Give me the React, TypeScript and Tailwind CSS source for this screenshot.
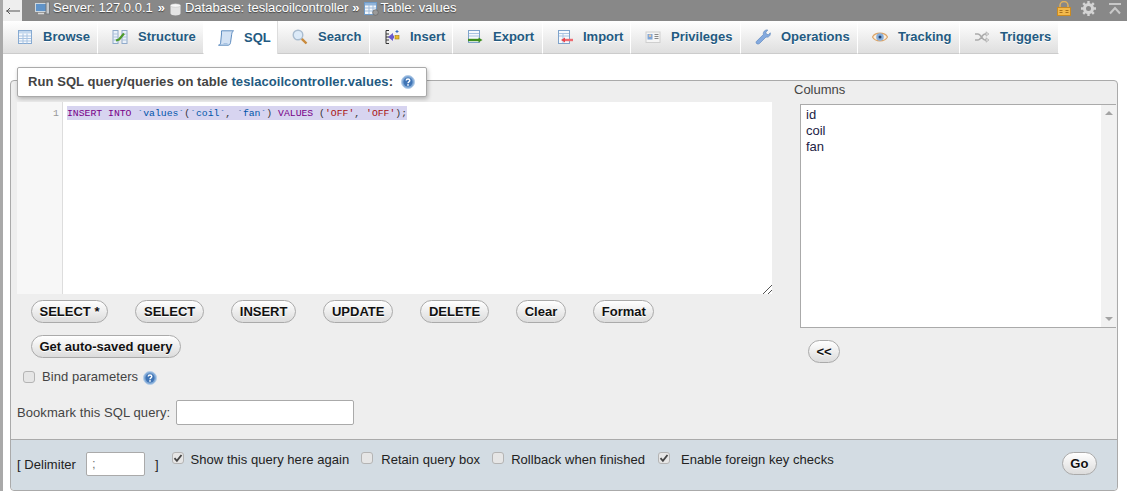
import React from "react";

const HelpIcon = () => (
  <svg width="14" height="14" viewBox="0 0 14 14" className="shrink-0">
    <circle cx="7" cy="7" r="6.5" fill="#7fa8d6" stroke="#b4cde8" />
    <circle cx="7" cy="7" r="4.6" fill="#3f74b5" />
    <path d="M5.200 5.600c0-2.200 3.600-2.200 3.600 0 0 1.300-1.800 1.300-1.800 2.600" fill="none" stroke="#fff" strokeWidth="1.400" />
    <rect x="6.200" y="9.200" width="1.600" height="1.500" fill="#fff" />
  </svg>
);

const Ico = ({ children }: { children: React.ReactNode }) => (
  <svg width="16" height="16" viewBox="0 0 16 16" className="shrink-0">
    {children}
  </svg>
);

const BrowseIcon = () => (
  <Ico>
    <rect x="1.500" y="1.500" width="13" height="13" fill="#f6f9fd" stroke="#86aad2" />
    <rect x="2" y="2" width="12" height="2.500" fill="#c3d8ee" />
    <path d="M2 7h12M2 9.500h12M2 12h12M6 4.500v10M10 4.500v10" stroke="#a9c4e2" fill="none" />
  </Ico>
);

const StructureIcon = () => (
  <Ico>
    <rect x="1" y="1.500" width="5" height="13" fill="#eaf1f9" stroke="#8faaca" />
    <rect x="10" y="1.500" width="5" height="13" fill="#eaf1f9" stroke="#8faaca" />
    <path d="M1 5h5M1 8h5M1 11h5M10 5h5M10 8h5M10 11h5" stroke="#aec3da" />
    <path d="M4 11.500l3-1 5-6" fill="none" stroke="#4c9a2a" strokeWidth="2.200" />
  </Ico>
);

const SqlIcon = () => (
  <Ico>
    <path d="M3.500.800h12c-1.100.7-1.600 1.800-1.800 3.500l-1.200 8.400c-.3 1.600-1.100 2.500-2.400 2.500H.500c1.200 0 1.900-.9 2.100-2.300L3.500 4C3.700 2.500 3.200 1.500 3.500.800z" fill="#d3e2f4" stroke="#5f8dc0" />
    <path d="M5.500 13.500h4" stroke="#a6c2e2" />
  </Ico>
);

const SearchIcon = () => (
  <Ico>
    <circle cx="6" cy="6" r="4.800" fill="#dceaf8" stroke="#a9bccf" strokeWidth="1.400" />
    <path d="M9.800 9.800l4.700 4.700" stroke="#c98a3c" strokeWidth="2.400" />
  </Ico>
);

const InsertIcon = () => (
  <Ico>
    <path d="M5 1.500H2v13h3M2 5h3M2 8h3M2 11h3" fill="none" stroke="#333" />
    <path d="M4 8l5-4v2.500h1v3H9V12z" fill="#6a5acd" />
    <rect x="11" y="6.500" width="4" height="3.500" fill="#e8b92e" stroke="#a57f10" strokeWidth=".6" />
    <path d="M13 1v3M11.500 2.500h3" stroke="#3a6bc0" />
  </Ico>
);

const ExportIcon = () => (
  <Ico>
    <rect x="1.500" y="1.500" width="11" height="12" fill="#f6f9fd" stroke="#7fa3cb" />
    <path d="M2 4.500h10M2 7h10" stroke="#a9c4e2" />
    <path d="M1 11h11" stroke="#3e8e1f" strokeWidth="2.400" />
    <path d="M11.500 8.500l4 2.500-4 2.500z" fill="#3e8e1f" />
  </Ico>
);

const ImportIcon = () => (
  <Ico>
    <rect x="1.500" y="1.500" width="11" height="13" fill="#f6f9fd" stroke="#7fa3cb" />
    <path d="M2 4.500h10M2 7h10M6 4v10" stroke="#a9c4e2" />
    <path d="M7 11h9" stroke="#ee6a70" strokeWidth="2.400" />
    <path d="M8 8.500l-4 2.500 4 2.500z" fill="#e8454c" />
  </Ico>
);

const PrivilegesIcon = () => (
  <Ico>
    <rect x="1" y="3" width="14" height="10.500" fill="#f5f5f5" stroke="#cfcfcf" />
    <rect x="2.500" y="5" width="5" height="5.500" fill="#7fa6d8" />
    <circle cx="5" cy="6.800" r="1.300" fill="#e9c9a5" />
    <path d="M9.500 5.500h4M9.500 7.500h4M9.500 9.500h4" stroke="#888" />
  </Ico>
);

const OperationsIcon = () => (
  <Ico>
    <path d="M3 15c-1.400 0-2.300-1.100-1.700-2.400L8.400 5.500C7.800 3 9.800.6 12.800 1L10.800 3.200l.6 2 2 .6 1.900-2c.5 2.800-1.900 5-4.300 4.200L4.500 14.500c-.4.300-.9.500-1.500.500z" fill="#84aadf" stroke="#6089c0" strokeWidth=".7" />
  </Ico>
);

const TrackingIcon = () => (
  <Ico>
    <path d="M.5 8C3 2.800 13 2.800 15.500 8 13 13.200 3 13.200.5 8z" fill="#fbeedd" stroke="#dba468" strokeWidth="1.200" />
    <circle cx="8" cy="8" r="3.800" fill="#86aedb" />
    <circle cx="8" cy="8" r="1.500" fill="#24406b" />
  </Ico>
);

const TriggersIcon = () => (
  <Ico>
    <path d="M1 5h3c3 0 4 6 7 6h1M1 11h3c3 0 4-6 7-6h1" fill="none" stroke="#aaa" strokeWidth="1.500" />
    <path d="M12 2.800l3 2.200-3 2.200zM12 8.800l3 2.200-3 2.200z" fill="#ddd" stroke="#999" strokeWidth=".5" />
  </Ico>
);

const tabs = [
  { label: "Browse", icon: <BrowseIcon />, w: "w-[95px]" },
  { label: "Structure", icon: <StructureIcon />, w: "w-[106px]" },
  { label: "SQL", icon: <SqlIcon />, w: "w-[74px]", active: true },
  { label: "Search", icon: <SearchIcon />, w: "w-[92px]" },
  { label: "Insert", icon: <InsertIcon />, w: "w-[83px]" },
  { label: "Export", icon: <ExportIcon />, w: "w-[90px]" },
  { label: "Import", icon: <ImportIcon />, w: "w-[88px]" },
  { label: "Privileges", icon: <PrivilegesIcon />, w: "w-[110px]" },
  { label: "Operations", icon: <OperationsIcon />, w: "w-[117px]" },
  { label: "Tracking", icon: <TrackingIcon />, w: "w-[102px]" },
  { label: "Triggers", icon: <TriggersIcon />, w: "w-[99px]" },
];

function Btn({ children }: { children: React.ReactNode }) {
  return (
    <button className="h-[23px] rounded-full border border-[#aaaaaa] bg-gradient-to-b from-[#ffffff] to-[#dcdcdc] px-[7.500px] text-[13px] leading-[21px] font-bold text-[#111111] [text-shadow:0_1px_0_#ffffff]">
      {children}
    </button>
  );
}

function Check({ on, className }: { on?: boolean; className: string }) {
  return (
    <span className={`flex h-[12px] w-[12px] shrink-0 items-center justify-center rounded-[3px] border border-[#b4b4b4] bg-[#e6e6e6] ${className}`}>
      {on && (
        <svg width="10" height="10" viewBox="0 0 10 10">
          <path d="M1.500 5.200l2.400 2.600L8.500 2" fill="none" stroke="#444" strokeWidth="1.800" />
        </svg>
      )}
    </span>
  );
}

export default function App() {
  return (
    <div className="flex h-[491px] w-[1127px] overflow-hidden bg-white font-['Liberation_Sans',Arial,sans-serif] text-[13px] text-[#444444]">
      <div className="w-[3px] shrink-0 bg-[#a9a9a9]" />
      <div className="flex min-w-0 flex-1 flex-col">
        {/* breadcrumb */}
        <div className="flex h-[21px] shrink-0 items-center bg-[#888888] pb-[5px] text-white [text-shadow:0_1px_1px_#444444]">
          <div className="flex h-[21px] w-[19px] items-center justify-center self-start bg-[#eeeeee] text-[15px] leading-none text-[#555555] [text-shadow:none]">
            <svg width="14" height="8" viewBox="0 0 14 8">
              <path d="M0 4h14M4 1L1 4l3 3" fill="none" stroke="#555" />
            </svg>
          </div>
          <svg width="15" height="14" viewBox="0 0 15 14" className="ml-[13px] mr-[3px]">
            <rect x="0.500" y="2.500" width="11" height="8" fill="#5f93c9" stroke="#ccd6de" />
            <rect x="11" y="1" width="3.500" height="12" fill="#c4c8cc" stroke="#74787c" />
            <path d="M3 12.500h6" stroke="#d8d8d8" strokeWidth="1.500" />
          </svg>
          <span className="whitespace-nowrap">Server: 127.0.0.1</span>
          <span className="ml-[5px] font-bold">»</span>
          <svg width="11" height="13" viewBox="0 0 11 13" className="ml-[5px] mr-[4px] mt-[2px]">
            <path d="M.500 2.500v8c0 2.500 10 2.500 10 0v-8z" fill="#e4e4e4" />
            <ellipse cx="5.500" cy="2.500" rx="5" ry="1.800" fill="#f6f6f6" stroke="#bbb" strokeWidth=".5" />
          </svg>
          <span className="whitespace-nowrap">Database: teslacoilcontroller</span>
          <span className="ml-[4px] font-bold">»</span>
          <svg width="15" height="14" viewBox="0 0 15 14" className="ml-[4px] mr-[2px] mt-[2px]">
            <rect x="0.500" y="0.500" width="12" height="12" fill="#f4f8fc" stroke="#6f9bc8" />
            <rect x="1" y="1" width="11" height="2.500" fill="#8fb3d9" />
            <path d="M1 6h11M1 9h11M5 3v9M9 3v9" stroke="#9fbcdc" />
            <circle cx="11.500" cy="10.500" r="2.800" fill="#9a9a9a" stroke="#666" strokeWidth=".7" />
          </svg>
          <span className="whitespace-nowrap">Table: values</span>
          <div className="ml-auto flex items-center gap-[10px] pr-[6px] pt-[1px]">
            <svg width="14" height="15" viewBox="0 0 14 15">
              <path d="M3 7V4.500a4 4 0 0 1 8 0V7" fill="none" stroke="#e0b25e" strokeWidth="1.500" />
              <rect x="0.500" y="6.500" width="13" height="8" fill="#f2b94c" stroke="#c98a22" />
              <path d="M2.500 9.500h3M8.500 9.500h3M2.500 11.500h3M8.500 11.500h3" stroke="#a8701c" />
            </svg>
            <svg width="15" height="15" viewBox="0 0 15 15">
              <circle cx="7.500" cy="7.500" r="4" fill="none" stroke="#d4d4d4" strokeWidth="3" />
              <path d="M7.500 0v3M7.500 12v3M0 7.500h3M12 7.500h3M2.200 2.200l2 2M10.800 10.800l2 2M2.200 12.800l2-2M10.800 4.200l2-2" stroke="#d4d4d4" strokeWidth="2.400" />
            </svg>
            <svg width="12" height="12" viewBox="0 0 12 12" className="ml-[3px]">
              <path d="M0 1h12M1 10.500l5-5.500 5 5.500" fill="none" stroke="#c8c8c8" strokeWidth="2" />
            </svg>
          </div>
        </div>

        {/* tabs */}
        <div className="flex h-[33px] shrink-0 items-stretch">
          {tabs.map((t) => (
            <div
              key={t.label}
              className={
                t.active
                  ? `flex items-center whitespace-nowrap border-r border-[#dddddd] bg-white pl-[14px] text-[13px] font-bold text-[#235a81] [text-shadow:0_1px_0_#ffffff] ${t.w}`
                  : `flex items-center whitespace-nowrap border-r border-b border-r-white border-b-[#cccccc] bg-gradient-to-b from-[#ffffff] to-[#dfdfdf] pl-[14px] text-[13px] font-bold text-[#235a81] [text-shadow:0_1px_0_#ffffff] ${t.w}`
              }
            >
              <span className="mr-[10px] flex">{t.icon}</span>
              {t.label}
            </div>
          ))}
        </div>

        {/* query form */}
        <div className="relative ml-[7px] mr-[9px] mt-[26px] flex h-[411px] flex-col rounded-[4px] border border-[#aaaaaa] bg-[#eeeeee]">
          <div className="absolute -top-[14px] left-[6px] flex h-[30px] items-center rounded-[2px] border border-[#aaaaaa] bg-white pl-[10px] pr-[11px] font-bold tracking-[0.07px] shadow-[1px_2px_4px_rgba(0,0,0,0.25)]">
            <span>
              Run SQL query/queries on table <span className="text-[#235a81]">teslacoilcontroller.values</span>:
            </span>
            <span className="ml-[8px] flex">
              <HelpIcon />
            </span>
          </div>

          <div className="flex min-h-0 flex-1 pl-[6px]">
            {/* left column */}
            <div className="flex w-[755px] shrink-0 flex-col pt-[21px]">
              <div className="relative flex h-[192px] bg-white">
                <div className="w-[46px] shrink-0 border-r border-[#dddddd] bg-[#f7f7f7] pr-[3px] pt-[4px] text-right font-['Liberation_Mono',monospace] text-[9.800px] leading-[15px] text-[#999999]">
                  1
                </div>
                <div className="pl-[4px] pt-[4px] font-['Liberation_Mono',monospace] text-[9.770px]">
                  <span className="block h-[14px] whitespace-pre bg-[#d7d4f0] leading-[15px]">
                    <span className="text-[#770088]">INSERT INTO</span>{" "}
                    <span className="text-[#0055aa]">`values`</span>
                    <span className="text-[#333333]">(</span>
                    <span className="text-[#0055aa]">`coil`</span>
                    <span className="text-[#333333]">, </span>
                    <span className="text-[#0055aa]">`fan`</span>
                    <span className="text-[#333333]">) </span>
                    <span className="text-[#770088]">VALUES</span>
                    <span className="text-[#333333]"> (</span>
                    <span className="text-[#aa1111]">'OFF'</span>
                    <span className="text-[#333333]">, </span>
                    <span className="text-[#aa1111]">'OFF'</span>
                    <span className="text-[#333333]">);</span>
                  </span>
                </div>
                <svg width="10" height="10" viewBox="0 0 10 10" className="absolute bottom-0 right-0">
                  <path d="M1 10L10 1M6 10l4-4" stroke="#555" strokeWidth="1" />
                </svg>
              </div>

              <div className="mt-[6px] flex gap-x-[27.500px] pl-[14px]">
                <Btn>SELECT *</Btn>
                <Btn>SELECT</Btn>
                <Btn>INSERT</Btn>
                <Btn>UPDATE</Btn>
                <Btn>DELETE</Btn>
                <Btn>Clear</Btn>
                <Btn>Format</Btn>
              </div>
              <div className="mt-[12px] pl-[14px]">
                <Btn>Get auto-saved query</Btn>
              </div>

              <div className="mt-[11px] flex h-[15px] items-center">
                <Check className="ml-[6px]" />
                <span className="ml-[7px] tracking-[0.05px]">Bind parameters</span>
                <span className="ml-[5px] mt-[2px] flex">
                  <HelpIcon />
                </span>
              </div>

              <div className="mt-[16px] flex items-center">
                <span className="tracking-[0.08px]">Bookmark this SQL query:</span>
                <span className="ml-[6px] h-[25px] w-[178px] rounded-[2px] border border-[#aaaaaa] bg-white" />
              </div>
            </div>

            {/* right column */}
            <div className="ml-[22px] flex min-w-0 flex-1 flex-col">
              <div className="mt-[1px] h-[22px] leading-[16px]">Columns</div>
              <div className="ml-[6px] flex h-[224px] w-[316px] border-y border-l border-[#aaaaaa] bg-white">
                <div className="flex-1 pl-[5px] pt-[2px] text-[13px] leading-[16px] text-[#222244]">
                  <div>id</div>
                  <div>coil</div>
                  <div>fan</div>
                </div>
                <div className="flex w-[15px] flex-col items-center justify-between bg-[#f1f1f1] py-[6px]">
                  <span className="h-0 w-0 border-x-[4px] border-b-[4px] border-x-transparent border-b-[#a3a3a3]" />
                  <span className="h-0 w-0 border-x-[4px] border-t-[4px] border-x-transparent border-t-[#a3a3a3]" />
                </div>
              </div>
              <div className="ml-[14px] mt-[12px]">
                <Btn>{"<<"}</Btn>
              </div>
            </div>
          </div>

          {/* footer */}
          <div className="flex h-[51px] shrink-0 items-start rounded-b-[4px] border-t border-[#aaaaaa] bg-[#d3dce3] pl-[6px] tracking-[0.04px] text-[#222222]">
            <span className="mt-[15px]">[ Delimiter</span>
            <span className="ml-[10px] mt-[12px] flex h-[24px] w-[59px] items-center rounded-[2px] border border-[#aaaaaa] bg-white pl-[5px] text-[#777777]">
              ;
            </span>
            <span className="ml-[10px] mt-[15px]">]</span>
            <Check on className="ml-[13px] mt-[12px]" />
            <span className="ml-[7px] mt-[10px]">Show this query here again</span>
            <Check className="ml-[12px] mt-[12px]" />
            <span className="ml-[8px] mt-[10px]">Retain query box</span>
            <Check className="ml-[12px] mt-[12px]" />
            <span className="ml-[7px] mt-[10px]">Rollback when finished</span>
            <Check on className="ml-[13px] mt-[12px]" />
            <span className="ml-[11px] mt-[10px]">Enable foreign key checks</span>
            <div className="ml-auto mr-[20px] mt-[12px]">
              <Btn>Go</Btn>
            </div>
          </div>
        </div>
      </div>
    </div>
  );
}
